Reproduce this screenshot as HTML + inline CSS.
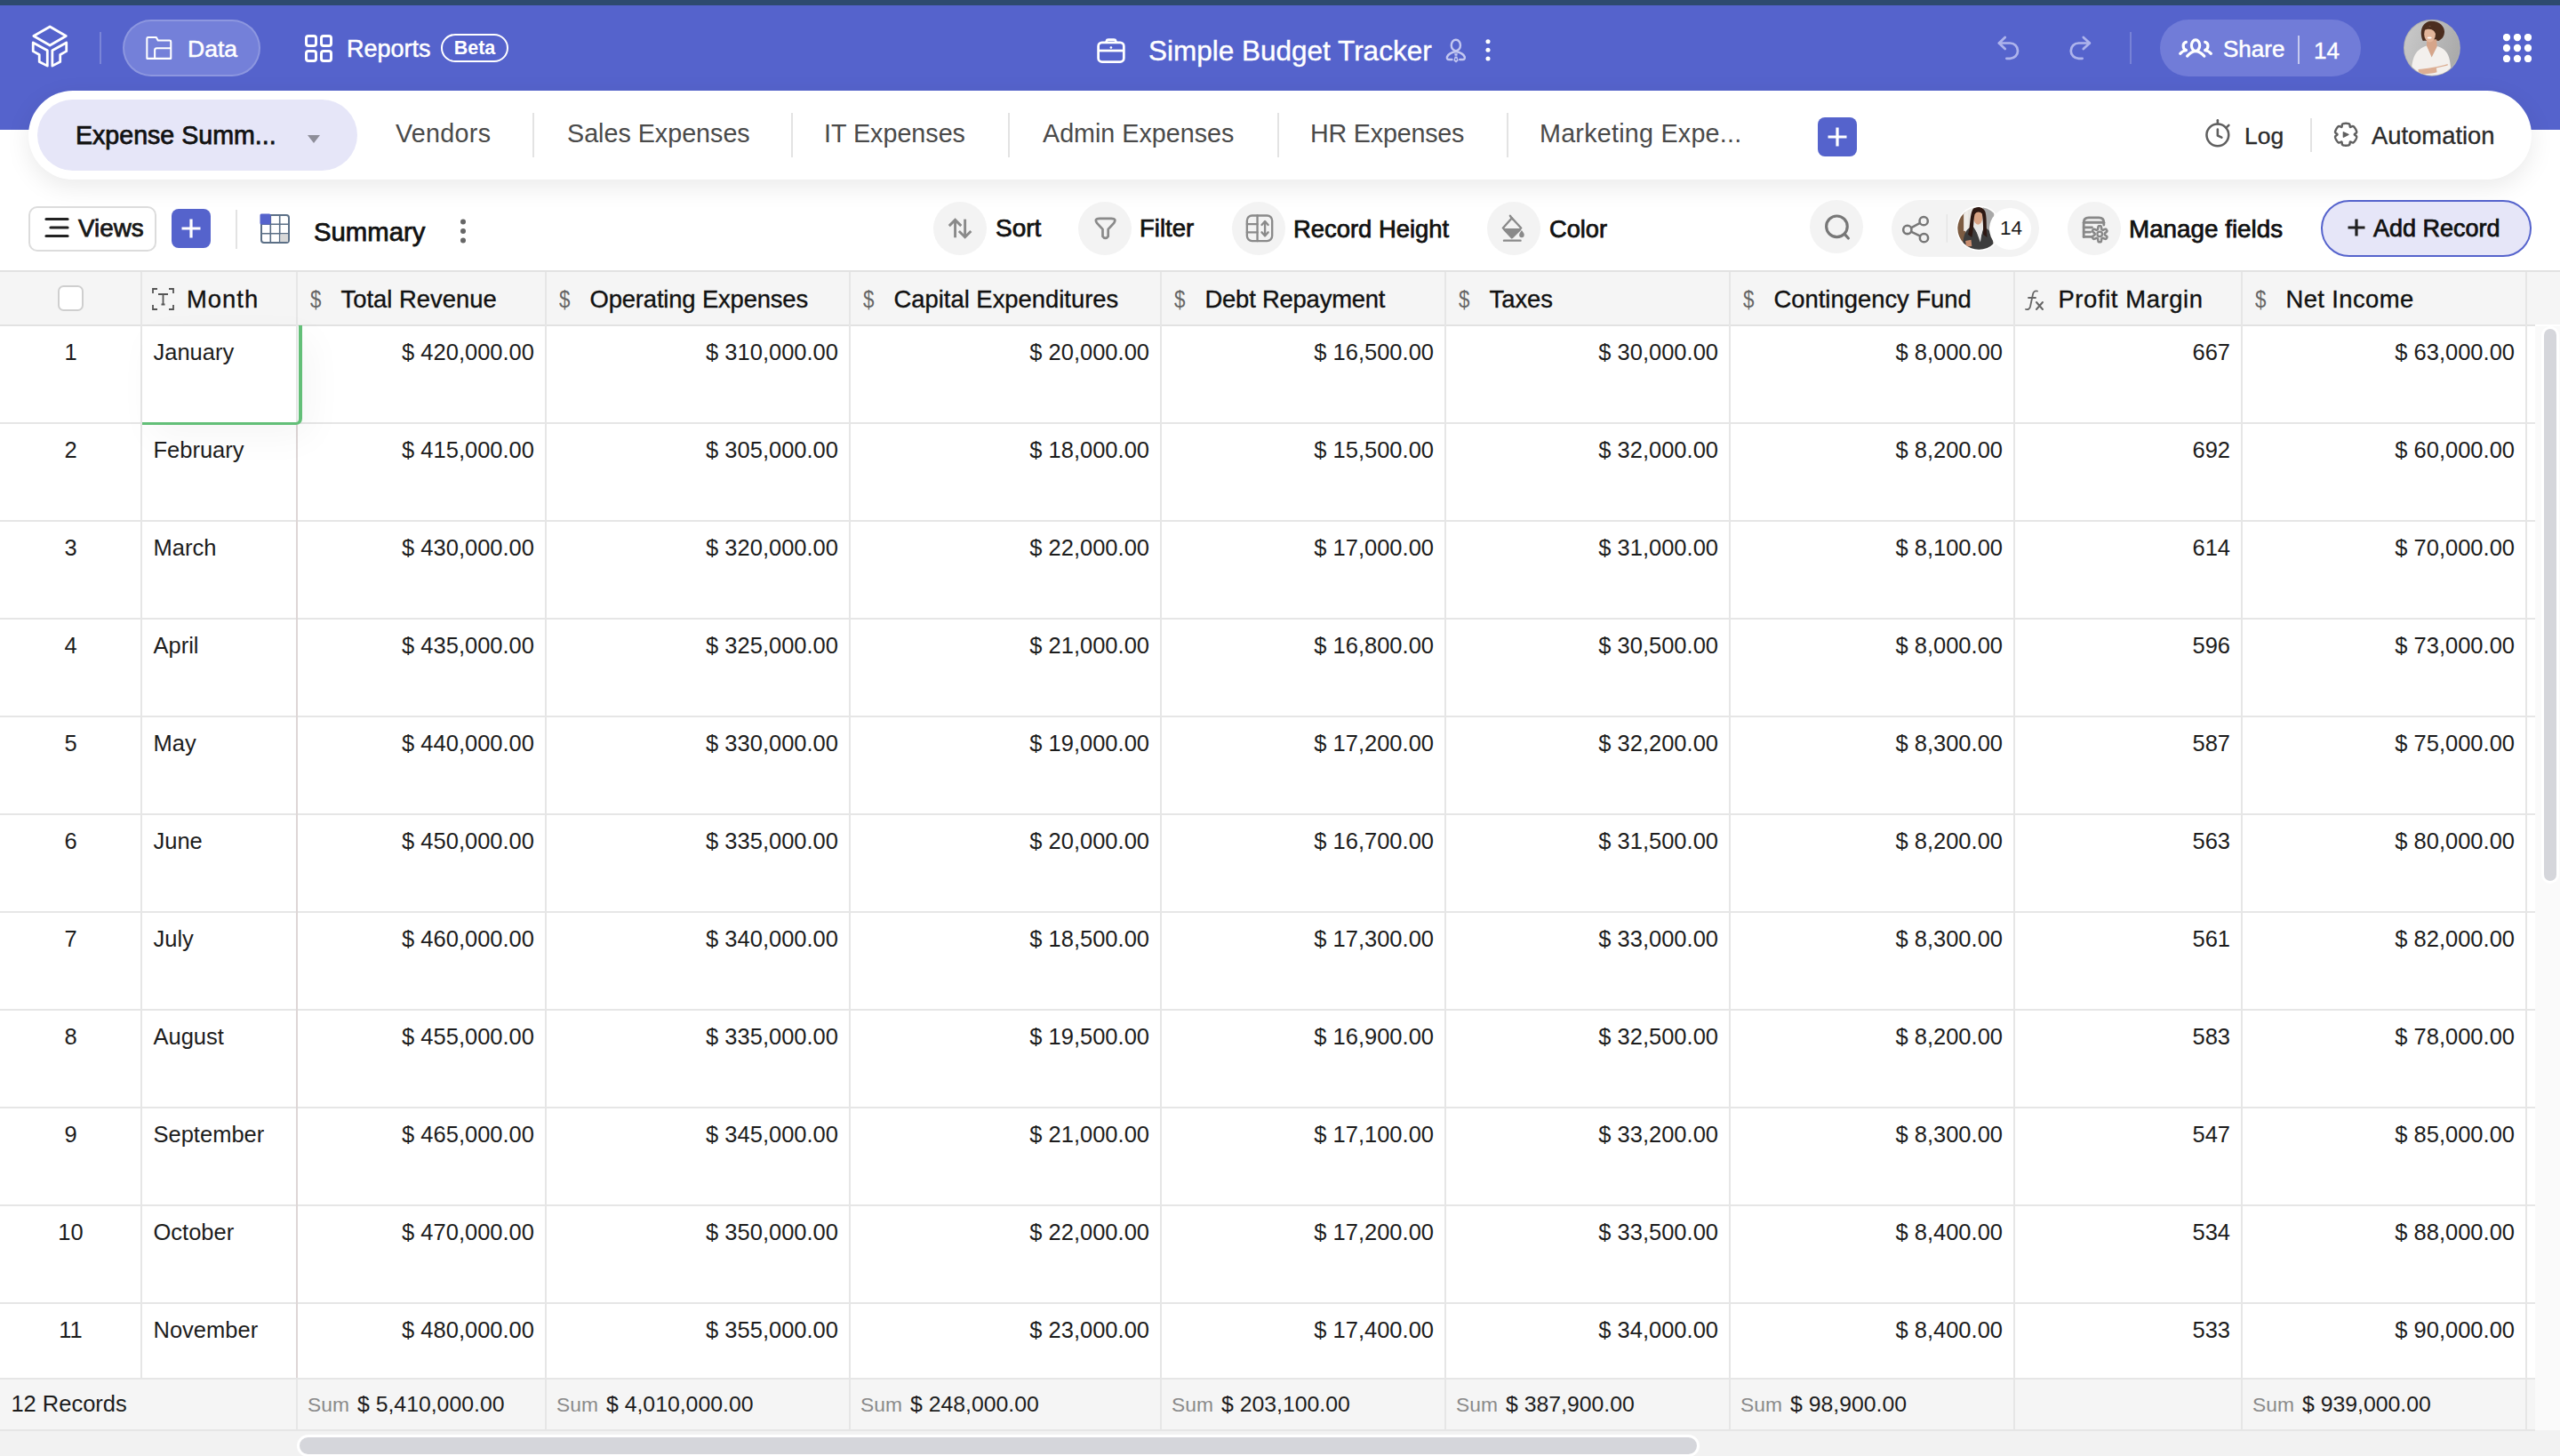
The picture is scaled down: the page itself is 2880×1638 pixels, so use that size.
<!DOCTYPE html>
<html><head><meta charset="utf-8"><style>
html,body{margin:0;padding:0;}
body{width:2880px;height:1638px;overflow:hidden;position:relative;background:#fff;font-family:"Liberation Sans", sans-serif;}
.t{position:absolute;white-space:nowrap;}
</style></head><body>
<div style="position:absolute;left:0px;top:0px;width:2880px;height:146px;background:#5563cc"></div>
<div style="position:absolute;left:0px;top:0px;width:2880px;height:6px;background:#2e4a6e"></div>
<svg style="position:absolute;left:30px;top:22px;" width="54" height="60" viewBox="0 0 1310 1456"><g fill="none" stroke="#fff" stroke-width="68" stroke-linejoin="round"><path d="M190 450 L635 195 L1075 450 L635 705 Z"/><path d="M175 630 L565 845 L565 1265 L345 1150 L345 960 L175 865 Z"/><path d="M1085 630 L700 845 L700 1265 L915 1150 L915 960 L1085 865 Z"/></g></svg>
<div style="position:absolute;left:112px;top:36px;width:2px;height:36px;background:rgba(255,255,255,0.22)"></div>
<div style="position:absolute;left:138px;top:22px;width:155px;height:64px;background:#7480d9;border-radius:32px;box-shadow:inset 0 0 0 2px rgba(255,255,255,0.18);box-sizing:border-box"></div>
<svg style="position:absolute;left:156px;top:34px;" width="48" height="40" viewBox="0 0 1747 1456"><g fill="none" stroke="#fff" stroke-width="75" stroke-linejoin="round"><path d="M340 1160 L340 340 Q340 290 390 290 L720 290 L790 420 L1270 420 Q1320 420 1320 470 L1320 1160 Z"/><path d="M660 1160 L660 820 Q660 740 740 740 L1320 740"/></g></svg>
<div class="t" style="left:211.0px;top:42.0px;font-size:26.5px;line-height:26.5px;color:#fff;font-weight:400;-webkit-text-stroke:0.5px #fff">Data</div>
<svg style="position:absolute;left:343px;top:39px;" width="31" height="31" viewBox="0 0 31 31"><g fill="none" stroke="#fff" stroke-width="3"><rect x="1.5" y="1.5" width="11" height="11" rx="2.5"/><rect x="18.5" y="1.5" width="11" height="11" rx="2.5"/><rect x="1.5" y="18.5" width="11" height="11" rx="2.5"/><rect x="18.5" y="18.5" width="11" height="11" rx="2.5"/></g></svg>
<div class="t" style="left:390.0px;top:41.5px;font-size:27px;line-height:27px;color:#fff;font-weight:400;-webkit-text-stroke:0.5px #fff">Reports</div>
<div style="position:absolute;left:496px;top:38px;width:76px;height:32px;border:2.5px solid #fff;border-radius:16px;box-sizing:border-box"></div>
<div class="t" style="left:496.0px;width:76px;top:43.7px;font-size:21.5px;line-height:21.5px;color:#fff;font-weight:700;text-align:center;">Beta</div>
<svg style="position:absolute;left:1226px;top:36px;" width="50" height="40" viewBox="0 0 1820 1456"><g fill="none" stroke="#fff" stroke-width="100" stroke-linejoin="round"><rect x="350" y="430" width="1045" height="790" rx="150"/><path d="M670 430 L690 360 Q700 310 760 310 L990 310 Q1050 310 1060 360 L1080 430"/><path d="M350 765 L1395 765"/></g><circle cx="870" cy="635" r="48" fill="#fff"/></svg>
<div class="t" style="left:1292.0px;top:41.7px;font-size:31.5px;line-height:31.5px;color:#fff;font-weight:400;-webkit-text-stroke:0.4px #fff">Simple Budget Tracker</div>
<svg style="position:absolute;left:1620px;top:36px;" width="70" height="40" viewBox="0 0 2548 1456"><g fill="none" stroke="#c3c7f0" stroke-width="88" stroke-linejoin="round" stroke-linecap="round"><ellipse cx="650" cy="545" rx="185" ry="225"/><path d="M490 1130 L370 1130 Q270 1130 290 1020 Q360 850 650 800 Q940 850 1010 1020 Q1030 1130 930 1130 L810 1130"/></g><path d="M590 885 L720 885 L705 975 L605 975 Z" fill="#c3c7f0"/><path d="M605 1005 L705 1005 L750 1170 L655 1260 L560 1170 Z" fill="#c3c7f0"/><circle cx="655" cy="1120" r="38" fill="#5563cc"/><circle cx="1965" cy="390" r="92" fill="#fff"/><circle cx="1965" cy="740" r="92" fill="#fff"/><circle cx="1965" cy="1090" r="92" fill="#fff"/></svg>
<svg style="position:absolute;left:2240px;top:30px;" width="120" height="50" viewBox="0 0 2560 1067"><g fill="none" stroke="#aeb4ec" stroke-width="58" stroke-linecap="round" stroke-linejoin="round"><path d="M335 255 L190 395 L335 535"/><path d="M190 395 L455 395 A185 185 0 0 1 455 765 L370 765"/><path d="M2215 255 L2365 395 L2215 535"/><path d="M2365 395 L2100 395 A185 185 0 0 0 2100 765 L2190 765"/></g></svg>
<div style="position:absolute;left:2396px;top:36px;width:2px;height:36px;background:rgba(255,255,255,0.2)"></div>
<div style="position:absolute;left:2430px;top:22px;width:226px;height:64px;background:#717cd8;border-radius:32px"></div>
<svg style="position:absolute;left:2440px;top:30px;" width="60" height="50" viewBox="0 0 1747 1456"><g fill="none" stroke="#fff" stroke-width="92" stroke-linecap="round"><ellipse cx="875" cy="615" rx="135" ry="180"/><path d="M600 965 C700 850 800 805 875 805 C950 805 1050 850 1160 965"/><path d="M565 505 C440 530 440 720 560 765"/><path d="M370 885 C430 815 480 785 560 780"/><path d="M1185 505 C1310 530 1310 720 1190 765"/><path d="M1380 885 C1320 815 1270 785 1190 780"/></g></svg>
<div class="t" style="left:2501.0px;top:41.7px;font-size:26px;line-height:26px;color:#fff;font-weight:400;-webkit-text-stroke:0.5px #fff">Share</div>
<div style="position:absolute;left:2585px;top:40px;width:2px;height:32px;background:rgba(255,255,255,0.6)"></div>
<div class="t" style="left:2603.0px;top:43.6px;font-size:26px;line-height:26px;color:#fff;font-weight:400;-webkit-text-stroke:0.4px #fff">14</div>
<svg style="position:absolute;left:2696px;top:16px;" width="80" height="76" viewBox="0 0 1533 1456"><defs><clipPath id="av1"><circle cx="765" cy="725" r="592"/></clipPath><linearGradient id="avg" x1="0" y1="0" x2="1" y2="0.3"><stop offset="0" stop-color="#cfcfcf"/><stop offset="1" stop-color="#a9a9a9"/></linearGradient></defs><circle cx="765" cy="725" r="612" fill="#b3b3b0"/><g clip-path="url(#av1)"><rect x="0" y="0" width="1533" height="1456" fill="url(#avg)"/><path d="M570 575 C500 420 520 190 725 150 C915 135 1040 260 1035 385 C1030 480 985 540 905 575 C880 560 640 560 570 575 Z" fill="#4b2d1f"/><path d="M655 540 L865 540 L875 700 L760 935 L650 700 Z" fill="#d6a58a"/><path d="M320 1320 C330 900 420 760 650 680 L760 930 L880 690 C1100 760 1175 900 1175 1320 Z" fill="#f3f0ed"/><ellipse cx="720" cy="430" rx="122" ry="172" fill="#e3b59b"/><path d="M600 330 C640 250 760 230 850 300 C880 380 870 440 860 470 C840 360 760 300 640 330 Z" fill="#4b2d1f"/><ellipse cx="712" cy="508" rx="50" ry="20" fill="#fff"/><path d="M470 1190 C620 1175 900 1140 1105 1075 L1110 1185 C900 1260 650 1305 480 1300 Z" fill="#dcae93"/><path d="M860 1160 L1150 1090 L1170 1300 L880 1300 Z" fill="#f3f0ed"/></g></svg>
<svg style="position:absolute;left:2816px;top:38px;" width="32" height="32" viewBox="0 0 32 32"><circle cx="4" cy="4" r="4.2" fill="#fff"/><circle cx="4" cy="16" r="4.2" fill="#fff"/><circle cx="4" cy="28" r="4.2" fill="#fff"/><circle cx="16" cy="4" r="4.2" fill="#fff"/><circle cx="16" cy="16" r="4.2" fill="#fff"/><circle cx="16" cy="28" r="4.2" fill="#fff"/><circle cx="28" cy="4" r="4.2" fill="#fff"/><circle cx="28" cy="16" r="4.2" fill="#fff"/><circle cx="28" cy="28" r="4.2" fill="#fff"/></svg>
<div style="position:absolute;left:32px;top:102px;width:2816px;height:100px;background:#fff;border-radius:50px;box-shadow:0 8px 28px rgba(0,0,0,0.085)"></div>
<div style="position:absolute;left:42px;top:112px;width:360px;height:80px;background:#e6e6f8;border-radius:40px"></div>
<div class="t" style="left:85.0px;top:137.5px;font-size:28.6px;line-height:28.6px;color:#111;font-weight:400;-webkit-text-stroke:0.75px #111">Expense Summ...</div>
<svg style="position:absolute;left:346px;top:152px;" width="14" height="10" viewBox="0 0 14 10"><path d="M0 0 L14 0 L7 9 Z" fill="#8e8e99"/></svg>
<div class="t" style="left:445.0px;top:135.7px;font-size:28.7px;line-height:28.7px;color:#4a4a4a;font-weight:400;letter-spacing:0.3px">Vendors</div>
<div class="t" style="left:638.0px;top:135.7px;font-size:28.7px;line-height:28.7px;color:#4a4a4a;font-weight:400;letter-spacing:0px">Sales Expenses</div>
<div class="t" style="left:927.0px;top:135.7px;font-size:28.7px;line-height:28.7px;color:#4a4a4a;font-weight:400;letter-spacing:0px">IT Expenses</div>
<div class="t" style="left:1173.0px;top:135.7px;font-size:28.7px;line-height:28.7px;color:#4a4a4a;font-weight:400;letter-spacing:0px">Admin Expenses</div>
<div class="t" style="left:1474.0px;top:135.7px;font-size:28.7px;line-height:28.7px;color:#4a4a4a;font-weight:400;letter-spacing:-0.2px">HR Expenses</div>
<div class="t" style="left:1732.0px;top:135.7px;font-size:28.7px;line-height:28.7px;color:#4a4a4a;font-weight:400;letter-spacing:0.25px">Marketing Expe...</div>
<div style="position:absolute;left:599px;top:127px;width:2px;height:50px;background:#e3e3e3"></div>
<div style="position:absolute;left:890px;top:127px;width:2px;height:50px;background:#e3e3e3"></div>
<div style="position:absolute;left:1134px;top:127px;width:2px;height:50px;background:#e3e3e3"></div>
<div style="position:absolute;left:1437px;top:127px;width:2px;height:50px;background:#e3e3e3"></div>
<div style="position:absolute;left:1695px;top:127px;width:2px;height:50px;background:#e3e3e3"></div>
<div style="position:absolute;left:2045px;top:132px;width:44px;height:44px;background:#5563cc;border-radius:8px"></div>
<svg style="position:absolute;left:2045px;top:132px;" width="44" height="44" viewBox="0 0 44 44"><path d="M22 11.5 V32.5 M11.5 22 H32.5" stroke="#fff" stroke-width="3.2"/></svg>
<svg style="position:absolute;left:2474px;top:128px;" width="40" height="44" viewBox="0 0 1324 1456"><g fill="none" stroke="#5f5f5f" stroke-width="85" stroke-linecap="round" stroke-linejoin="round"><circle cx="690" cy="790" r="410"/><path d="M690 240 L690 370"/><path d="M1010 515 L1105 425"/><path d="M690 580 L690 810 L840 880"/></g></svg>
<div class="t" style="left:2525.0px;top:139.5px;font-size:26.5px;line-height:26.5px;color:#2a2a2a;font-weight:400;-webkit-text-stroke:0.3px #2a2a2a">Log</div>
<div style="position:absolute;left:2599px;top:133px;width:2px;height:38px;background:#e3e3e3"></div>
<svg style="position:absolute;left:2618px;top:128px;" width="42" height="44" viewBox="0 0 1390 1456"><path d="M700 358 L714 358 L729 359 L743 360 L757 362 L772 364 L786 367 L800 370 L814 374 L826 381 L837 394 L844 414 L847 440 L849 465 L852 485 L858 495 L871 496 L890 488 L913 477 L936 468 L957 463 L974 466 L986 474 L996 484 L1006 494 L1016 505 L1025 516 L1033 528 L1042 540 L1049 552 L1057 564 L1064 577 L1070 589 L1076 602 L1082 616 L1087 629 L1092 643 L1096 656 L1100 670 L1100 685 L1094 701 L1080 717 L1060 732 L1039 746 L1023 759 L1017 770 L1023 781 L1039 794 L1060 808 L1080 823 L1094 839 L1100 855 L1100 870 L1096 884 L1092 897 L1087 911 L1082 924 L1076 938 L1070 951 L1064 963 L1057 976 L1049 988 L1042 1000 L1033 1012 L1025 1024 L1016 1035 L1006 1046 L996 1056 L986 1066 L974 1074 L957 1077 L936 1072 L913 1063 L890 1052 L871 1044 L858 1045 L852 1055 L849 1075 L847 1100 L844 1126 L837 1146 L826 1159 L814 1166 L800 1170 L786 1173 L772 1176 L757 1178 L743 1180 L729 1181 L714 1182 L700 1182 L686 1182 L671 1181 L657 1180 L643 1178 L628 1176 L614 1173 L600 1170 L586 1166 L574 1159 L563 1146 L556 1126 L553 1100 L551 1075 L548 1055 L542 1045 L529 1044 L510 1052 L487 1063 L464 1072 L443 1077 L426 1074 L414 1066 L404 1056 L394 1046 L384 1035 L375 1024 L367 1012 L358 1000 L351 988 L343 976 L336 963 L330 951 L324 938 L318 924 L313 911 L308 897 L304 884 L300 870 L300 855 L306 839 L320 823 L340 808 L361 794 L377 781 L383 770 L377 759 L361 746 L340 732 L320 717 L306 701 L300 685 L300 670 L304 656 L308 643 L313 629 L318 616 L324 602 L330 589 L336 577 L343 564 L351 552 L358 540 L367 528 L375 516 L384 505 L394 494 L404 484 L414 474 L426 466 L443 463 L464 468 L487 477 L510 488 L529 496 L541 495 L548 485 L551 465 L553 440 L556 414 L563 394 L574 381 L586 374 L600 370 L614 367 L628 364 L643 362 L657 360 L671 359 L686 358 L700 358 Z" fill="none" stroke="#5f5f5f" stroke-width="80" stroke-linejoin="round"/><path d="M610 690 L790 775 L610 865 Z" fill="#5f5f5f" stroke="#5f5f5f" stroke-width="50" stroke-linejoin="round"/></svg>
<div class="t" style="left:2668.0px;top:138.7px;font-size:27.4px;line-height:27.4px;color:#2a2a2a;font-weight:400;-webkit-text-stroke:0.3px #2a2a2a">Automation</div>
<div style="position:absolute;left:32px;top:232px;width:144px;height:51px;border:2px solid #dcdcdc;border-radius:10px;box-sizing:border-box;background:#fff"></div>
<svg style="position:absolute;left:50px;top:244px;" width="28" height="24" viewBox="0 0 28 24"><g stroke="#222" stroke-width="3.2" stroke-linecap="round"><path d="M2 2.5 H26"/><path d="M7 12 H26"/><path d="M2 21.5 H26"/></g></svg>
<div class="t" style="left:88.0px;top:242.8px;font-size:27.8px;line-height:27.8px;color:#1a1a1a;font-weight:400;-webkit-text-stroke:0.75px #111">Views</div>
<div style="position:absolute;left:193px;top:235px;width:44px;height:44px;background:#5563cc;border-radius:8px"></div>
<svg style="position:absolute;left:193px;top:235px;" width="44" height="44" viewBox="0 0 44 44"><path d="M22 11.5 V32.5 M11.5 22 H32.5" stroke="#fff" stroke-width="3.2"/></svg>
<div style="position:absolute;left:265px;top:236px;width:2px;height:44px;background:#e3e3e3"></div>
<svg style="position:absolute;left:292px;top:240px;" width="35" height="35" viewBox="0 0 35 35"><rect x="2" y="2" width="31" height="31" rx="3" fill="#fff" stroke="#5b6f86" stroke-width="2"/><path d="M12.3 2 V33 M22.7 2 V33 M2 12.3 H33 M2 22.7 H33" stroke="#5b6f86" stroke-width="1.6"/><rect x="0.5" y="0.5" width="12" height="12" rx="1.5" fill="#5563cc"/><rect x="23.5" y="23.5" width="8.5" height="8.5" fill="#d8d8d8"/></svg>
<div class="t" style="left:353.0px;top:246.2px;font-size:29.3px;line-height:29.3px;color:#111;font-weight:400;-webkit-text-stroke:0.75px #111">Summary</div>
<svg style="position:absolute;left:516px;top:245px;" width="10" height="30" viewBox="0 0 10 30"><circle cx="5" cy="4.5" r="3" fill="#666"/><circle cx="5" cy="15" r="3" fill="#666"/><circle cx="5" cy="25.5" r="3" fill="#666"/></svg>
<div style="position:absolute;left:1050px;top:227px;width:60px;height:60px;background:#f3f3f3;border-radius:50%"></div>
<svg style="position:absolute;left:1050px;top:226px;" width="240" height="62" viewBox="0 0 2560 661"><g fill="none" stroke="#8a8a8a" stroke-width="31" stroke-linecap="butt" stroke-linejoin="miter"><path d="M262 230 L262 440"/><path d="M190 300 L262 228 L334 300"/><path d="M380 220 L380 430"/><path d="M308 362 L380 434 L452 362"/></g></svg>
<div class="t" style="left:1120.0px;top:243.0px;font-size:28px;line-height:28px;color:#111;font-weight:400;-webkit-text-stroke:0.75px #111">Sort</div>
<div style="position:absolute;left:1213px;top:227px;width:60px;height:60px;background:#f3f3f3;border-radius:50%"></div>
<svg style="position:absolute;left:1050px;top:226px;" width="240" height="62" viewBox="0 0 2560 661"><path d="M1995 212 L2135 212 Q2205 212 2165 268 L2098 340 L2098 425 Q2065 470 2032 425 L2032 340 L1965 268 Q1925 212 1995 212 Z" fill="none" stroke="#8a8a8a" stroke-width="29" stroke-linejoin="round"/></svg>
<div class="t" style="left:1282.0px;top:243.4px;font-size:27.5px;line-height:27.5px;color:#111;font-weight:400;-webkit-text-stroke:0.75px #111">Filter</div>
<div style="position:absolute;left:1386px;top:227px;width:60px;height:60px;background:#f3f3f3;border-radius:50%"></div>
<svg style="position:absolute;left:1384px;top:226px;" width="352" height="62" viewBox="0 0 2560 451"><g fill="none" stroke="#8a8a8a" stroke-width="17" stroke-linecap="round" stroke-linejoin="round"><rect x="137" y="120" width="206" height="208" rx="42"/><path d="M222 120 L222 328"/><path d="M137 190 L222 190 M137 257 L222 257"/><path d="M284 168 L284 285"/><path d="M258 196 L284 168 L310 196"/><path d="M258 257 L284 285 L310 257"/></g></svg>
<div class="t" style="left:1455.0px;top:243.8px;font-size:27.4px;line-height:27.4px;color:#111;font-weight:400;-webkit-text-stroke:0.75px #111">Record Height</div>
<div style="position:absolute;left:1673px;top:227px;width:60px;height:60px;background:#f3f3f3;border-radius:50%"></div>
<svg style="position:absolute;left:1384px;top:226px;" width="352" height="62" viewBox="0 0 2560 451"><g fill="none" stroke="#8a8a8a" stroke-width="17" stroke-linecap="round" stroke-linejoin="round"><path d="M2290 122 L2310 150"/><path d="M2305 140 L2380 222 L2305 298 L2232 222 Z"/><path d="M2240 325 L2375 325"/></g><path d="M2245 235 L2370 235 L2305 298 Z" fill="#8a8a8a" stroke="#8a8a8a" stroke-width="20" stroke-linejoin="round"/><path d="M2385 240 Q2410 270 2405 280 A20 20 0 0 1 2365 280 Q2362 270 2385 240 Z" fill="#8a8a8a"/></svg>
<div class="t" style="left:1743.0px;top:244.0px;font-size:27.2px;line-height:27.2px;color:#111;font-weight:400;-webkit-text-stroke:0.75px #111">Color</div>
<div style="position:absolute;left:2036px;top:225px;width:60px;height:60px;background:#f3f3f3;border-radius:50%"></div>
<svg style="position:absolute;left:2030px;top:220px;" width="270" height="72" viewBox="0 0 2560 683"><g fill="none" stroke="#777" stroke-width="30" stroke-linecap="round"><circle cx="345" cy="330" r="112"/><path d="M428 412 L468 455"/></g></svg>
<div style="position:absolute;left:2128px;top:225px;width:166px;height:64px;background:#f3f3f3;border-radius:32px"></div>
<svg style="position:absolute;left:2030px;top:220px;" width="270" height="72" viewBox="0 0 2560 683"><g fill="none" stroke="#777" stroke-width="24"><circle cx="1272" cy="272" r="44"/><circle cx="1098" cy="365" r="44"/><circle cx="1275" cy="452" r="44"/><path d="M1137 344 L1233 292 M1137 386 L1236 432"/></g><path d="M1520 200 L1520 500" stroke="#e2e2e2" stroke-width="12"/></svg>
<svg style="position:absolute;left:2196px;top:228px;" width="96" height="58" viewBox="0 0 2410 1456"><defs><clipPath id="av2"><circle cx="760" cy="725" r="600"/></clipPath></defs><circle cx="760" cy="725" r="640" fill="#fff"/><g clip-path="url(#av2)"><rect width="2410" height="1456" fill="#e9e6e2"/><rect x="100" y="0" width="280" height="1456" fill="#7d5c42"/><rect x="330" y="200" width="120" height="600" fill="#efece8"/><rect x="880" y="100" width="300" height="700" fill="#a8a8a8"/><path d="M300 1456 C300 900 380 720 600 680 L800 1000 L900 690 C1100 760 1180 950 1180 1456 Z" fill="#3d3d3d"/><path d="M640 680 L800 1120 L870 690 Z" fill="#e8e8e8"/><ellipse cx="735" cy="420" rx="125" ry="200" fill="#d9a384"/><path d="M600 170 C700 100 880 110 940 260 C990 420 960 700 990 980 L880 900 C890 700 870 450 850 320 C800 250 700 240 640 330 C600 500 620 700 560 980 L450 900 C520 700 500 300 600 170 Z" fill="#2e1812"/><path d="M380 1080 L540 1050 L560 1230 L400 1240 Z" fill="#c98e70"/></g></svg>
<div style="position:absolute;left:2238.0px;top:233.5px;width:47.0px;height:47.0px;background:#fff;border-radius:50%"></div>
<div class="t" style="left:2250.0px;top:245.8px;font-size:22.5px;line-height:22.5px;color:#1a1a1a;font-weight:400;">14</div>
<div style="position:absolute;left:2326px;top:227px;width:60px;height:60px;background:#f3f3f3;border-radius:50%"></div>
<svg style="position:absolute;left:2320px;top:220px;" width="360" height="72" viewBox="0 0 2560 512"><g fill="none" stroke="#888" stroke-width="20" stroke-linecap="round"><path d="M172 330 L172 215 Q172 177 212 177 L293 177 Q333 177 333 215 L333 235"/><path d="M172 215 L333 215"/><path d="M172 255 L238 255"/><path d="M172 292 L225 292"/><path d="M172 330 L238 330"/></g><path d=""/></svg>
<svg style="position:absolute;left:2320px;top:220px;" width="360" height="72" viewBox="0 0 2560 512"><path d="M300.0 244.0 L304.2 244.1 L308.4 244.5 L311.8 248.9 L313.5 257.8 L314.1 266.6 L315.3 271.0 L317.7 272.1 L320.0 273.4 L322.2 274.7 L324.4 276.3 L328.8 275.1 L336.8 271.2 L345.3 268.3 L350.8 269.0 L353.2 272.4 L355.4 276.0 L357.4 279.7 L359.1 283.5 L357.1 288.6 L350.2 294.5 L342.9 299.5 L339.7 302.8 L339.9 305.4 L340.0 308.0 L339.9 310.6 L339.7 313.2 L342.9 316.5 L350.2 321.5 L357.1 327.4 L359.1 332.5 L357.4 336.3 L355.4 340.0 L353.2 343.6 L350.8 347.0 L345.3 347.7 L336.8 344.8 L328.8 340.9 L324.4 339.7 L322.2 341.3 L320.0 342.6 L317.7 343.9 L315.3 345.0 L314.1 349.4 L313.5 358.2 L311.8 367.1 L308.4 371.5 L304.2 371.9 L300.0 372.0 L295.8 371.9 L291.6 371.5 L288.2 367.1 L286.5 358.2 L285.9 349.4 L284.7 345.0 L282.3 343.9 L280.0 342.6 L277.8 341.3 L275.6 339.7 L271.2 340.9 L263.2 344.8 L254.7 347.7 L249.2 347.0 L246.8 343.6 L244.6 340.0 L242.6 336.3 L240.9 332.5 L242.9 327.4 L249.8 321.5 L257.1 316.5 L260.3 313.2 L260.1 310.6 L260.0 308.0 L260.1 305.4 L260.3 302.8 L257.1 299.5 L249.8 294.5 L242.9 288.6 L240.9 283.5 L242.6 279.7 L244.6 276.0 L246.8 272.4 L249.2 269.0 L254.7 268.3 L263.2 271.2 L271.2 275.1 L275.6 276.3 L277.8 274.7 L280.0 273.4 L282.3 272.1 L284.7 271.0 L285.9 266.6 L286.5 257.8 L288.2 248.9 L291.6 244.5 L295.8 244.1 L300.0 244.0 Z" fill="#f3f3f3" stroke="#888" stroke-width="18" stroke-linejoin="round"/><circle cx="300" cy="308" r="20" fill="none" stroke="#888" stroke-width="16"/></svg>
<div class="t" style="left:2395.0px;top:243.6px;font-size:27.8px;line-height:27.8px;color:#111;font-weight:400;-webkit-text-stroke:0.75px #111">Manage fields</div>
<div style="position:absolute;left:2611px;top:225px;width:237px;height:64px;background:#e6e6f8;border:2.5px solid #5563cc;border-radius:32px;box-sizing:border-box"></div>
<svg style="position:absolute;left:2640px;top:245px;" width="22" height="22" viewBox="0 0 22 22"><path d="M11 1.5 V20.5 M1.5 11 H20.5" stroke="#222" stroke-width="3.2"/></svg>
<div class="t" style="left:2670.0px;top:244.1px;font-size:27px;line-height:27px;color:#111;font-weight:400;-webkit-text-stroke:0.75px #111">Add Record</div>
<div style="position:absolute;left:0px;top:304px;width:2880px;height:2px;background:#e2e2e2"></div>
<div style="position:absolute;left:0px;top:306px;width:2880px;height:59px;background:#f5f5f5"></div>
<div style="position:absolute;left:0px;top:365px;width:2852px;height:2px;background:#e2e2e2"></div>
<div style="position:absolute;left:0px;top:367px;width:2852px;height:1184px;background:#fff"></div>
<div style="position:absolute;left:2852px;top:367px;width:28px;height:1242px;background:#fafafa"></div>
<div style="position:absolute;left:0px;top:475px;width:2852px;height:2px;background:#e6e6e6"></div>
<div style="position:absolute;left:0px;top:585px;width:2852px;height:2px;background:#e6e6e6"></div>
<div style="position:absolute;left:0px;top:695px;width:2852px;height:2px;background:#e6e6e6"></div>
<div style="position:absolute;left:0px;top:805px;width:2852px;height:2px;background:#e6e6e6"></div>
<div style="position:absolute;left:0px;top:915px;width:2852px;height:2px;background:#e6e6e6"></div>
<div style="position:absolute;left:0px;top:1025px;width:2852px;height:2px;background:#e6e6e6"></div>
<div style="position:absolute;left:0px;top:1135px;width:2852px;height:2px;background:#e6e6e6"></div>
<div style="position:absolute;left:0px;top:1245px;width:2852px;height:2px;background:#e6e6e6"></div>
<div style="position:absolute;left:0px;top:1355px;width:2852px;height:2px;background:#e6e6e6"></div>
<div style="position:absolute;left:0px;top:1465px;width:2852px;height:2px;background:#e6e6e6"></div>
<div style="position:absolute;left:158px;top:306px;width:2px;height:1245px;background:#e6e6e6"></div>
<div style="position:absolute;left:333px;top:306px;width:2px;height:1245px;background:#e6e6e6"></div>
<div style="position:absolute;left:613px;top:306px;width:2px;height:1245px;background:#e6e6e6"></div>
<div style="position:absolute;left:955px;top:306px;width:2px;height:1245px;background:#e6e6e6"></div>
<div style="position:absolute;left:1305px;top:306px;width:2px;height:1245px;background:#e6e6e6"></div>
<div style="position:absolute;left:1625px;top:306px;width:2px;height:1245px;background:#e6e6e6"></div>
<div style="position:absolute;left:1945px;top:306px;width:2px;height:1245px;background:#e6e6e6"></div>
<div style="position:absolute;left:2265px;top:306px;width:2px;height:1245px;background:#e6e6e6"></div>
<div style="position:absolute;left:2521px;top:306px;width:2px;height:1245px;background:#e6e6e6"></div>
<div style="position:absolute;left:2841px;top:306px;width:2px;height:1245px;background:#e6e6e6"></div>
<svg style="position:absolute;left:65px;top:321px;" width="29" height="29" viewBox="0 0 29 29"><rect x="1" y="1" width="27" height="27" rx="5.5" fill="#fff" stroke="#cfcfcf" stroke-width="2"/></svg>
<svg style="position:absolute;left:171px;top:324px;" width="25" height="25" viewBox="0 0 25 25"><g fill="none" stroke="#555" stroke-width="1.8"><path d="M1 6 V1 H6 M19 1 H24 V6 M24 19 V24 H19 M6 24 H1 V19"/><path d="M7 7 H18 M12.5 7 V18.5 M10.5 18.5 H14.5"/></g></svg>
<div class="t" style="left:210.0px;top:323.0px;font-size:27.4px;line-height:27.4px;color:#111;font-weight:400;-webkit-text-stroke:0.35px #111;letter-spacing:1px">Month</div>
<div class="t" style="left:349.0px;top:322.8px;font-size:28px;line-height:28px;color:#666;font-weight:400;transform:scaleX(0.8);transform-origin:left">$</div>
<div class="t" style="left:383.5px;top:323.0px;font-size:27.4px;line-height:27.4px;color:#111;font-weight:400;-webkit-text-stroke:0.35px #111;letter-spacing:0px">Total Revenue</div>
<div class="t" style="left:629.0px;top:322.8px;font-size:28px;line-height:28px;color:#666;font-weight:400;transform:scaleX(0.8);transform-origin:left">$</div>
<div class="t" style="left:663.5px;top:323.0px;font-size:27.4px;line-height:27.4px;color:#111;font-weight:400;-webkit-text-stroke:0.35px #111;letter-spacing:-0.15px">Operating Expenses</div>
<div class="t" style="left:971.0px;top:322.8px;font-size:28px;line-height:28px;color:#666;font-weight:400;transform:scaleX(0.8);transform-origin:left">$</div>
<div class="t" style="left:1005.5px;top:323.0px;font-size:27.4px;line-height:27.4px;color:#111;font-weight:400;-webkit-text-stroke:0.35px #111;letter-spacing:0px">Capital Expenditures</div>
<div class="t" style="left:1321.0px;top:322.8px;font-size:28px;line-height:28px;color:#666;font-weight:400;transform:scaleX(0.8);transform-origin:left">$</div>
<div class="t" style="left:1355.5px;top:323.0px;font-size:27.4px;line-height:27.4px;color:#111;font-weight:400;-webkit-text-stroke:0.35px #111;letter-spacing:-0.2px">Debt Repayment</div>
<div class="t" style="left:1641.0px;top:322.8px;font-size:28px;line-height:28px;color:#666;font-weight:400;transform:scaleX(0.8);transform-origin:left">$</div>
<div class="t" style="left:1675.5px;top:323.0px;font-size:27.4px;line-height:27.4px;color:#111;font-weight:400;-webkit-text-stroke:0.35px #111;letter-spacing:0px">Taxes</div>
<div class="t" style="left:1961.0px;top:322.8px;font-size:28px;line-height:28px;color:#666;font-weight:400;transform:scaleX(0.8);transform-origin:left">$</div>
<div class="t" style="left:1995.5px;top:323.0px;font-size:27.4px;line-height:27.4px;color:#111;font-weight:400;-webkit-text-stroke:0.35px #111;letter-spacing:0px">Contingency Fund</div>
<svg style="position:absolute;left:2277px;top:325px;" width="24" height="26" viewBox="0 0 24 26"><path d="M15 2.5 Q11 1.5 10 6 L7 20 Q6 24 2 23" fill="none" stroke="#666" stroke-width="1.8" stroke-linecap="round"/><path d="M5 10 H13" stroke="#666" stroke-width="1.8" stroke-linecap="round"/><path d="M14 15 L21 23 M21 15 L14 23" stroke="#666" stroke-width="2" stroke-linecap="round"/></svg>
<div class="t" style="left:2315.5px;top:323.0px;font-size:27.4px;line-height:27.4px;color:#111;font-weight:400;-webkit-text-stroke:0.35px #111;letter-spacing:0.6px">Profit Margin</div>
<div class="t" style="left:2537.0px;top:322.8px;font-size:28px;line-height:28px;color:#666;font-weight:400;transform:scaleX(0.8);transform-origin:left">$</div>
<div class="t" style="left:2571.5px;top:323.0px;font-size:27.4px;line-height:27.4px;color:#111;font-weight:400;-webkit-text-stroke:0.35px #111;letter-spacing:0.4px">Net Income</div>
<div class="t" style="left:29.5px;width:100px;top:384.0px;font-size:25.5px;line-height:25.5px;color:#1c1c1c;font-weight:400;text-align:center;">1</div>
<div class="t" style="left:172.5px;top:384.0px;font-size:25.5px;line-height:25.5px;color:#1c1c1c;font-weight:400;">January</div>
<div class="t" style="right:2279.0px;top:384.0px;font-size:25.5px;line-height:25.5px;color:#1c1c1c;font-weight:400;text-align:right;">$ 420,000.00</div>
<div class="t" style="right:1937.0px;top:384.0px;font-size:25.5px;line-height:25.5px;color:#1c1c1c;font-weight:400;text-align:right;">$ 310,000.00</div>
<div class="t" style="right:1587.0px;top:384.0px;font-size:25.5px;line-height:25.5px;color:#1c1c1c;font-weight:400;text-align:right;">$ 20,000.00</div>
<div class="t" style="right:1267.0px;top:384.0px;font-size:25.5px;line-height:25.5px;color:#1c1c1c;font-weight:400;text-align:right;">$ 16,500.00</div>
<div class="t" style="right:947.0px;top:384.0px;font-size:25.5px;line-height:25.5px;color:#1c1c1c;font-weight:400;text-align:right;">$ 30,000.00</div>
<div class="t" style="right:627.0px;top:384.0px;font-size:25.5px;line-height:25.5px;color:#1c1c1c;font-weight:400;text-align:right;">$ 8,000.00</div>
<div class="t" style="right:371.0px;top:384.0px;font-size:25.5px;line-height:25.5px;color:#1c1c1c;font-weight:400;text-align:right;">667</div>
<div class="t" style="right:51.0px;top:384.0px;font-size:25.5px;line-height:25.5px;color:#1c1c1c;font-weight:400;text-align:right;">$ 63,000.00</div>
<div class="t" style="left:29.5px;width:100px;top:494.0px;font-size:25.5px;line-height:25.5px;color:#1c1c1c;font-weight:400;text-align:center;">2</div>
<div class="t" style="left:172.5px;top:494.0px;font-size:25.5px;line-height:25.5px;color:#1c1c1c;font-weight:400;">February</div>
<div class="t" style="right:2279.0px;top:494.0px;font-size:25.5px;line-height:25.5px;color:#1c1c1c;font-weight:400;text-align:right;">$ 415,000.00</div>
<div class="t" style="right:1937.0px;top:494.0px;font-size:25.5px;line-height:25.5px;color:#1c1c1c;font-weight:400;text-align:right;">$ 305,000.00</div>
<div class="t" style="right:1587.0px;top:494.0px;font-size:25.5px;line-height:25.5px;color:#1c1c1c;font-weight:400;text-align:right;">$ 18,000.00</div>
<div class="t" style="right:1267.0px;top:494.0px;font-size:25.5px;line-height:25.5px;color:#1c1c1c;font-weight:400;text-align:right;">$ 15,500.00</div>
<div class="t" style="right:947.0px;top:494.0px;font-size:25.5px;line-height:25.5px;color:#1c1c1c;font-weight:400;text-align:right;">$ 32,000.00</div>
<div class="t" style="right:627.0px;top:494.0px;font-size:25.5px;line-height:25.5px;color:#1c1c1c;font-weight:400;text-align:right;">$ 8,200.00</div>
<div class="t" style="right:371.0px;top:494.0px;font-size:25.5px;line-height:25.5px;color:#1c1c1c;font-weight:400;text-align:right;">692</div>
<div class="t" style="right:51.0px;top:494.0px;font-size:25.5px;line-height:25.5px;color:#1c1c1c;font-weight:400;text-align:right;">$ 60,000.00</div>
<div class="t" style="left:29.5px;width:100px;top:604.0px;font-size:25.5px;line-height:25.5px;color:#1c1c1c;font-weight:400;text-align:center;">3</div>
<div class="t" style="left:172.5px;top:604.0px;font-size:25.5px;line-height:25.5px;color:#1c1c1c;font-weight:400;">March</div>
<div class="t" style="right:2279.0px;top:604.0px;font-size:25.5px;line-height:25.5px;color:#1c1c1c;font-weight:400;text-align:right;">$ 430,000.00</div>
<div class="t" style="right:1937.0px;top:604.0px;font-size:25.5px;line-height:25.5px;color:#1c1c1c;font-weight:400;text-align:right;">$ 320,000.00</div>
<div class="t" style="right:1587.0px;top:604.0px;font-size:25.5px;line-height:25.5px;color:#1c1c1c;font-weight:400;text-align:right;">$ 22,000.00</div>
<div class="t" style="right:1267.0px;top:604.0px;font-size:25.5px;line-height:25.5px;color:#1c1c1c;font-weight:400;text-align:right;">$ 17,000.00</div>
<div class="t" style="right:947.0px;top:604.0px;font-size:25.5px;line-height:25.5px;color:#1c1c1c;font-weight:400;text-align:right;">$ 31,000.00</div>
<div class="t" style="right:627.0px;top:604.0px;font-size:25.5px;line-height:25.5px;color:#1c1c1c;font-weight:400;text-align:right;">$ 8,100.00</div>
<div class="t" style="right:371.0px;top:604.0px;font-size:25.5px;line-height:25.5px;color:#1c1c1c;font-weight:400;text-align:right;">614</div>
<div class="t" style="right:51.0px;top:604.0px;font-size:25.5px;line-height:25.5px;color:#1c1c1c;font-weight:400;text-align:right;">$ 70,000.00</div>
<div class="t" style="left:29.5px;width:100px;top:714.0px;font-size:25.5px;line-height:25.5px;color:#1c1c1c;font-weight:400;text-align:center;">4</div>
<div class="t" style="left:172.5px;top:714.0px;font-size:25.5px;line-height:25.5px;color:#1c1c1c;font-weight:400;">April</div>
<div class="t" style="right:2279.0px;top:714.0px;font-size:25.5px;line-height:25.5px;color:#1c1c1c;font-weight:400;text-align:right;">$ 435,000.00</div>
<div class="t" style="right:1937.0px;top:714.0px;font-size:25.5px;line-height:25.5px;color:#1c1c1c;font-weight:400;text-align:right;">$ 325,000.00</div>
<div class="t" style="right:1587.0px;top:714.0px;font-size:25.5px;line-height:25.5px;color:#1c1c1c;font-weight:400;text-align:right;">$ 21,000.00</div>
<div class="t" style="right:1267.0px;top:714.0px;font-size:25.5px;line-height:25.5px;color:#1c1c1c;font-weight:400;text-align:right;">$ 16,800.00</div>
<div class="t" style="right:947.0px;top:714.0px;font-size:25.5px;line-height:25.5px;color:#1c1c1c;font-weight:400;text-align:right;">$ 30,500.00</div>
<div class="t" style="right:627.0px;top:714.0px;font-size:25.5px;line-height:25.5px;color:#1c1c1c;font-weight:400;text-align:right;">$ 8,000.00</div>
<div class="t" style="right:371.0px;top:714.0px;font-size:25.5px;line-height:25.5px;color:#1c1c1c;font-weight:400;text-align:right;">596</div>
<div class="t" style="right:51.0px;top:714.0px;font-size:25.5px;line-height:25.5px;color:#1c1c1c;font-weight:400;text-align:right;">$ 73,000.00</div>
<div class="t" style="left:29.5px;width:100px;top:824.0px;font-size:25.5px;line-height:25.5px;color:#1c1c1c;font-weight:400;text-align:center;">5</div>
<div class="t" style="left:172.5px;top:824.0px;font-size:25.5px;line-height:25.5px;color:#1c1c1c;font-weight:400;">May</div>
<div class="t" style="right:2279.0px;top:824.0px;font-size:25.5px;line-height:25.5px;color:#1c1c1c;font-weight:400;text-align:right;">$ 440,000.00</div>
<div class="t" style="right:1937.0px;top:824.0px;font-size:25.5px;line-height:25.5px;color:#1c1c1c;font-weight:400;text-align:right;">$ 330,000.00</div>
<div class="t" style="right:1587.0px;top:824.0px;font-size:25.5px;line-height:25.5px;color:#1c1c1c;font-weight:400;text-align:right;">$ 19,000.00</div>
<div class="t" style="right:1267.0px;top:824.0px;font-size:25.5px;line-height:25.5px;color:#1c1c1c;font-weight:400;text-align:right;">$ 17,200.00</div>
<div class="t" style="right:947.0px;top:824.0px;font-size:25.5px;line-height:25.5px;color:#1c1c1c;font-weight:400;text-align:right;">$ 32,200.00</div>
<div class="t" style="right:627.0px;top:824.0px;font-size:25.5px;line-height:25.5px;color:#1c1c1c;font-weight:400;text-align:right;">$ 8,300.00</div>
<div class="t" style="right:371.0px;top:824.0px;font-size:25.5px;line-height:25.5px;color:#1c1c1c;font-weight:400;text-align:right;">587</div>
<div class="t" style="right:51.0px;top:824.0px;font-size:25.5px;line-height:25.5px;color:#1c1c1c;font-weight:400;text-align:right;">$ 75,000.00</div>
<div class="t" style="left:29.5px;width:100px;top:934.0px;font-size:25.5px;line-height:25.5px;color:#1c1c1c;font-weight:400;text-align:center;">6</div>
<div class="t" style="left:172.5px;top:934.0px;font-size:25.5px;line-height:25.5px;color:#1c1c1c;font-weight:400;">June</div>
<div class="t" style="right:2279.0px;top:934.0px;font-size:25.5px;line-height:25.5px;color:#1c1c1c;font-weight:400;text-align:right;">$ 450,000.00</div>
<div class="t" style="right:1937.0px;top:934.0px;font-size:25.5px;line-height:25.5px;color:#1c1c1c;font-weight:400;text-align:right;">$ 335,000.00</div>
<div class="t" style="right:1587.0px;top:934.0px;font-size:25.5px;line-height:25.5px;color:#1c1c1c;font-weight:400;text-align:right;">$ 20,000.00</div>
<div class="t" style="right:1267.0px;top:934.0px;font-size:25.5px;line-height:25.5px;color:#1c1c1c;font-weight:400;text-align:right;">$ 16,700.00</div>
<div class="t" style="right:947.0px;top:934.0px;font-size:25.5px;line-height:25.5px;color:#1c1c1c;font-weight:400;text-align:right;">$ 31,500.00</div>
<div class="t" style="right:627.0px;top:934.0px;font-size:25.5px;line-height:25.5px;color:#1c1c1c;font-weight:400;text-align:right;">$ 8,200.00</div>
<div class="t" style="right:371.0px;top:934.0px;font-size:25.5px;line-height:25.5px;color:#1c1c1c;font-weight:400;text-align:right;">563</div>
<div class="t" style="right:51.0px;top:934.0px;font-size:25.5px;line-height:25.5px;color:#1c1c1c;font-weight:400;text-align:right;">$ 80,000.00</div>
<div class="t" style="left:29.5px;width:100px;top:1044.0px;font-size:25.5px;line-height:25.5px;color:#1c1c1c;font-weight:400;text-align:center;">7</div>
<div class="t" style="left:172.5px;top:1044.0px;font-size:25.5px;line-height:25.5px;color:#1c1c1c;font-weight:400;">July</div>
<div class="t" style="right:2279.0px;top:1044.0px;font-size:25.5px;line-height:25.5px;color:#1c1c1c;font-weight:400;text-align:right;">$ 460,000.00</div>
<div class="t" style="right:1937.0px;top:1044.0px;font-size:25.5px;line-height:25.5px;color:#1c1c1c;font-weight:400;text-align:right;">$ 340,000.00</div>
<div class="t" style="right:1587.0px;top:1044.0px;font-size:25.5px;line-height:25.5px;color:#1c1c1c;font-weight:400;text-align:right;">$ 18,500.00</div>
<div class="t" style="right:1267.0px;top:1044.0px;font-size:25.5px;line-height:25.5px;color:#1c1c1c;font-weight:400;text-align:right;">$ 17,300.00</div>
<div class="t" style="right:947.0px;top:1044.0px;font-size:25.5px;line-height:25.5px;color:#1c1c1c;font-weight:400;text-align:right;">$ 33,000.00</div>
<div class="t" style="right:627.0px;top:1044.0px;font-size:25.5px;line-height:25.5px;color:#1c1c1c;font-weight:400;text-align:right;">$ 8,300.00</div>
<div class="t" style="right:371.0px;top:1044.0px;font-size:25.5px;line-height:25.5px;color:#1c1c1c;font-weight:400;text-align:right;">561</div>
<div class="t" style="right:51.0px;top:1044.0px;font-size:25.5px;line-height:25.5px;color:#1c1c1c;font-weight:400;text-align:right;">$ 82,000.00</div>
<div class="t" style="left:29.5px;width:100px;top:1154.0px;font-size:25.5px;line-height:25.5px;color:#1c1c1c;font-weight:400;text-align:center;">8</div>
<div class="t" style="left:172.5px;top:1154.0px;font-size:25.5px;line-height:25.5px;color:#1c1c1c;font-weight:400;">August</div>
<div class="t" style="right:2279.0px;top:1154.0px;font-size:25.5px;line-height:25.5px;color:#1c1c1c;font-weight:400;text-align:right;">$ 455,000.00</div>
<div class="t" style="right:1937.0px;top:1154.0px;font-size:25.5px;line-height:25.5px;color:#1c1c1c;font-weight:400;text-align:right;">$ 335,000.00</div>
<div class="t" style="right:1587.0px;top:1154.0px;font-size:25.5px;line-height:25.5px;color:#1c1c1c;font-weight:400;text-align:right;">$ 19,500.00</div>
<div class="t" style="right:1267.0px;top:1154.0px;font-size:25.5px;line-height:25.5px;color:#1c1c1c;font-weight:400;text-align:right;">$ 16,900.00</div>
<div class="t" style="right:947.0px;top:1154.0px;font-size:25.5px;line-height:25.5px;color:#1c1c1c;font-weight:400;text-align:right;">$ 32,500.00</div>
<div class="t" style="right:627.0px;top:1154.0px;font-size:25.5px;line-height:25.5px;color:#1c1c1c;font-weight:400;text-align:right;">$ 8,200.00</div>
<div class="t" style="right:371.0px;top:1154.0px;font-size:25.5px;line-height:25.5px;color:#1c1c1c;font-weight:400;text-align:right;">583</div>
<div class="t" style="right:51.0px;top:1154.0px;font-size:25.5px;line-height:25.5px;color:#1c1c1c;font-weight:400;text-align:right;">$ 78,000.00</div>
<div class="t" style="left:29.5px;width:100px;top:1264.0px;font-size:25.5px;line-height:25.5px;color:#1c1c1c;font-weight:400;text-align:center;">9</div>
<div class="t" style="left:172.5px;top:1264.0px;font-size:25.5px;line-height:25.5px;color:#1c1c1c;font-weight:400;">September</div>
<div class="t" style="right:2279.0px;top:1264.0px;font-size:25.5px;line-height:25.5px;color:#1c1c1c;font-weight:400;text-align:right;">$ 465,000.00</div>
<div class="t" style="right:1937.0px;top:1264.0px;font-size:25.5px;line-height:25.5px;color:#1c1c1c;font-weight:400;text-align:right;">$ 345,000.00</div>
<div class="t" style="right:1587.0px;top:1264.0px;font-size:25.5px;line-height:25.5px;color:#1c1c1c;font-weight:400;text-align:right;">$ 21,000.00</div>
<div class="t" style="right:1267.0px;top:1264.0px;font-size:25.5px;line-height:25.5px;color:#1c1c1c;font-weight:400;text-align:right;">$ 17,100.00</div>
<div class="t" style="right:947.0px;top:1264.0px;font-size:25.5px;line-height:25.5px;color:#1c1c1c;font-weight:400;text-align:right;">$ 33,200.00</div>
<div class="t" style="right:627.0px;top:1264.0px;font-size:25.5px;line-height:25.5px;color:#1c1c1c;font-weight:400;text-align:right;">$ 8,300.00</div>
<div class="t" style="right:371.0px;top:1264.0px;font-size:25.5px;line-height:25.5px;color:#1c1c1c;font-weight:400;text-align:right;">547</div>
<div class="t" style="right:51.0px;top:1264.0px;font-size:25.5px;line-height:25.5px;color:#1c1c1c;font-weight:400;text-align:right;">$ 85,000.00</div>
<div class="t" style="left:29.5px;width:100px;top:1374.0px;font-size:25.5px;line-height:25.5px;color:#1c1c1c;font-weight:400;text-align:center;">10</div>
<div class="t" style="left:172.5px;top:1374.0px;font-size:25.5px;line-height:25.5px;color:#1c1c1c;font-weight:400;">October</div>
<div class="t" style="right:2279.0px;top:1374.0px;font-size:25.5px;line-height:25.5px;color:#1c1c1c;font-weight:400;text-align:right;">$ 470,000.00</div>
<div class="t" style="right:1937.0px;top:1374.0px;font-size:25.5px;line-height:25.5px;color:#1c1c1c;font-weight:400;text-align:right;">$ 350,000.00</div>
<div class="t" style="right:1587.0px;top:1374.0px;font-size:25.5px;line-height:25.5px;color:#1c1c1c;font-weight:400;text-align:right;">$ 22,000.00</div>
<div class="t" style="right:1267.0px;top:1374.0px;font-size:25.5px;line-height:25.5px;color:#1c1c1c;font-weight:400;text-align:right;">$ 17,200.00</div>
<div class="t" style="right:947.0px;top:1374.0px;font-size:25.5px;line-height:25.5px;color:#1c1c1c;font-weight:400;text-align:right;">$ 33,500.00</div>
<div class="t" style="right:627.0px;top:1374.0px;font-size:25.5px;line-height:25.5px;color:#1c1c1c;font-weight:400;text-align:right;">$ 8,400.00</div>
<div class="t" style="right:371.0px;top:1374.0px;font-size:25.5px;line-height:25.5px;color:#1c1c1c;font-weight:400;text-align:right;">534</div>
<div class="t" style="right:51.0px;top:1374.0px;font-size:25.5px;line-height:25.5px;color:#1c1c1c;font-weight:400;text-align:right;">$ 88,000.00</div>
<div class="t" style="left:29.5px;width:100px;top:1484.0px;font-size:25.5px;line-height:25.5px;color:#1c1c1c;font-weight:400;text-align:center;">11</div>
<div class="t" style="left:172.5px;top:1484.0px;font-size:25.5px;line-height:25.5px;color:#1c1c1c;font-weight:400;">November</div>
<div class="t" style="right:2279.0px;top:1484.0px;font-size:25.5px;line-height:25.5px;color:#1c1c1c;font-weight:400;text-align:right;">$ 480,000.00</div>
<div class="t" style="right:1937.0px;top:1484.0px;font-size:25.5px;line-height:25.5px;color:#1c1c1c;font-weight:400;text-align:right;">$ 355,000.00</div>
<div class="t" style="right:1587.0px;top:1484.0px;font-size:25.5px;line-height:25.5px;color:#1c1c1c;font-weight:400;text-align:right;">$ 23,000.00</div>
<div class="t" style="right:1267.0px;top:1484.0px;font-size:25.5px;line-height:25.5px;color:#1c1c1c;font-weight:400;text-align:right;">$ 17,400.00</div>
<div class="t" style="right:947.0px;top:1484.0px;font-size:25.5px;line-height:25.5px;color:#1c1c1c;font-weight:400;text-align:right;">$ 34,000.00</div>
<div class="t" style="right:627.0px;top:1484.0px;font-size:25.5px;line-height:25.5px;color:#1c1c1c;font-weight:400;text-align:right;">$ 8,400.00</div>
<div class="t" style="right:371.0px;top:1484.0px;font-size:25.5px;line-height:25.5px;color:#1c1c1c;font-weight:400;text-align:right;">533</div>
<div class="t" style="right:51.0px;top:1484.0px;font-size:25.5px;line-height:25.5px;color:#1c1c1c;font-weight:400;text-align:right;">$ 90,000.00</div>
<div style="position:absolute;left:333px;top:478px;width:2px;height:1073px;background:#ddd6d6"></div>
<div style="position:absolute;left:160px;top:366px;width:180px;height:112px;border-right:4px solid #63bf78;border-bottom:3.6px solid #63bf78;border-bottom-right-radius:7px;box-sizing:border-box;box-shadow:10px 14px 40px rgba(0,0,0,0.04)"></div>
<div style="position:absolute;left:0px;top:1551px;width:2852px;height:58px;background:#f5f5f5"></div>
<div style="position:absolute;left:0px;top:1550px;width:2852px;height:2px;background:#e6e6e6"></div>
<div style="position:absolute;left:333px;top:1551px;width:2px;height:58px;background:#e6e6e6"></div>
<div style="position:absolute;left:613px;top:1551px;width:2px;height:58px;background:#e6e6e6"></div>
<div style="position:absolute;left:955px;top:1551px;width:2px;height:58px;background:#e6e6e6"></div>
<div style="position:absolute;left:1305px;top:1551px;width:2px;height:58px;background:#e6e6e6"></div>
<div style="position:absolute;left:1625px;top:1551px;width:2px;height:58px;background:#e6e6e6"></div>
<div style="position:absolute;left:1945px;top:1551px;width:2px;height:58px;background:#e6e6e6"></div>
<div style="position:absolute;left:2265px;top:1551px;width:2px;height:58px;background:#e6e6e6"></div>
<div style="position:absolute;left:2521px;top:1551px;width:2px;height:58px;background:#e6e6e6"></div>
<div style="position:absolute;left:2841px;top:1551px;width:2px;height:58px;background:#e6e6e6"></div>
<div style="position:absolute;left:0px;top:1609px;width:2880px;height:29px;background:#f2f2f2"></div>
<div style="position:absolute;left:0px;top:1608px;width:2852px;height:2px;background:#e6e6e6"></div>
<div class="t" style="left:12.4px;top:1566.9px;font-size:25.5px;line-height:25.5px;color:#1c1c1c;font-weight:400;">12 Records</div>
<div class="t" style="left:346.0px;top:1569.2px;font-size:22.8px;line-height:22.8px;color:#8a8a8a;font-weight:400;">Sum</div>
<div class="t" style="left:402.0px;top:1567.5px;font-size:24.8px;line-height:24.8px;color:#1c1c1c;font-weight:400;">$ 5,410,000.00</div>
<div class="t" style="left:626.0px;top:1569.2px;font-size:22.8px;line-height:22.8px;color:#8a8a8a;font-weight:400;">Sum</div>
<div class="t" style="left:682.0px;top:1567.5px;font-size:24.8px;line-height:24.8px;color:#1c1c1c;font-weight:400;">$ 4,010,000.00</div>
<div class="t" style="left:968.0px;top:1569.2px;font-size:22.8px;line-height:22.8px;color:#8a8a8a;font-weight:400;">Sum</div>
<div class="t" style="left:1024.0px;top:1567.5px;font-size:24.8px;line-height:24.8px;color:#1c1c1c;font-weight:400;">$ 248,000.00</div>
<div class="t" style="left:1318.0px;top:1569.2px;font-size:22.8px;line-height:22.8px;color:#8a8a8a;font-weight:400;">Sum</div>
<div class="t" style="left:1374.0px;top:1567.5px;font-size:24.8px;line-height:24.8px;color:#1c1c1c;font-weight:400;">$ 203,100.00</div>
<div class="t" style="left:1638.0px;top:1569.2px;font-size:22.8px;line-height:22.8px;color:#8a8a8a;font-weight:400;">Sum</div>
<div class="t" style="left:1694.0px;top:1567.5px;font-size:24.8px;line-height:24.8px;color:#1c1c1c;font-weight:400;">$ 387,900.00</div>
<div class="t" style="left:1958.0px;top:1569.2px;font-size:22.8px;line-height:22.8px;color:#8a8a8a;font-weight:400;">Sum</div>
<div class="t" style="left:2014.0px;top:1567.5px;font-size:24.8px;line-height:24.8px;color:#1c1c1c;font-weight:400;">$ 98,900.00</div>
<div class="t" style="left:2534.0px;top:1569.2px;font-size:22.8px;line-height:22.8px;color:#8a8a8a;font-weight:400;">Sum</div>
<div class="t" style="left:2590.0px;top:1567.5px;font-size:24.8px;line-height:24.8px;color:#1c1c1c;font-weight:400;">$ 939,000.00</div>
<div style="position:absolute;left:334px;top:1614px;width:1578px;height:25px;background:#d5d6db;border:3.5px solid #fff;border-radius:13px;box-sizing:border-box"></div>
<div style="position:absolute;left:2859px;top:367px;width:20px;height:627px;background:#d5d6db;border:3.5px solid #fff;border-radius:10px;box-sizing:border-box"></div>
</body></html>
